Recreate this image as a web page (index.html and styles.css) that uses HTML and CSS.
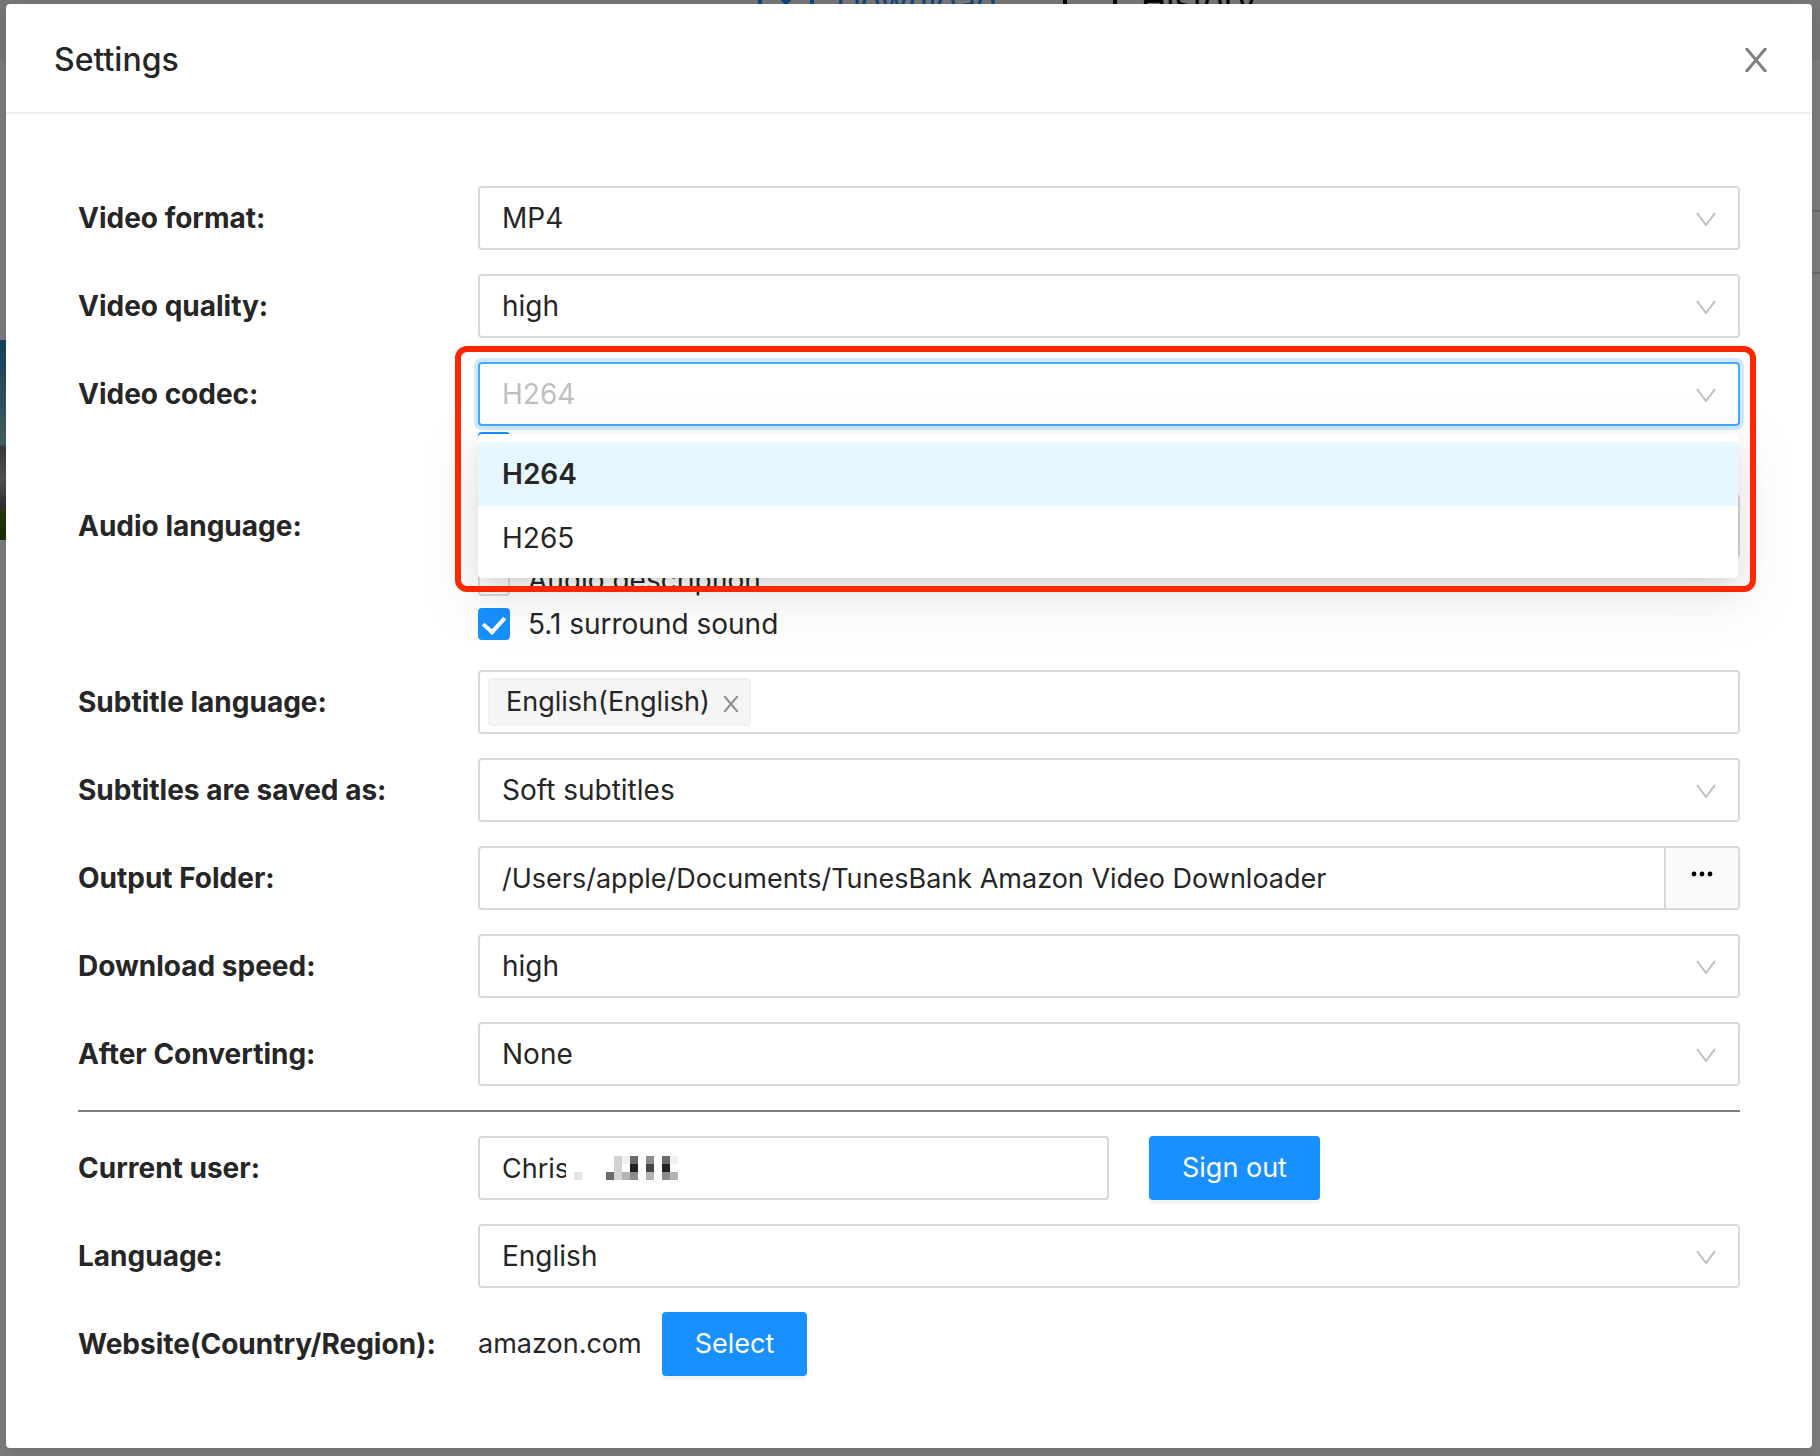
FILE: index.html
```html
<!DOCTYPE html>
<html lang="en">
<head>
    <meta charset="UTF-8">
    <meta name="viewport" content="width=device-width, initial-scale=1.0">
    <title>Settings</title>
    <link rel="stylesheet" href="styles.css">
</head>
<body>
    <!-- App window behind the dialog -->
    <div class="app" aria-hidden="true">
        <nav class="tabs">
            <a href="#" class="tab active" tabindex="-1">
                <svg viewBox="0 0 60 40" class="tab-icon"><path d="M4 36V6h14M56 36V6H42M30 2v14M22 14l8 9 8-9z" /></svg>
                Download
            </a>
            <a href="#" class="tab" tabindex="-1">
                <svg viewBox="0 0 60 40" class="tab-icon"><path d="M4 36V8M54 36V8" /></svg>
                History
            </a>
        </nav>
        <div class="app-button"></div>
        <div class="thumb"></div>
    </div>

    <!-- Settings dialog -->
    <div class="mask">
        <div class="modal" role="dialog" aria-labelledby="title">
            <header class="modal-header">
                <h1 id="title">Settings</h1>
                <button class="close-btn" aria-label="Close">
                    <svg viewBox="0 0 24 24"><path d="M2 0l20 24M22 0L2 24" /></svg>
                </button>
            </header>

            <form class="modal-body">
                <div class="row">
                    <label for="format">Video format:</label>
                    <div class="select">
                        <select id="format"><option>MP4</option></select>
                        <svg class="arrow" viewBox="0 0 20 14"><path d="M1 1l9 12 9-12" /></svg>
                    </div>
                </div>

                <div class="row">
                    <label for="quality">Video quality:</label>
                    <div class="select">
                        <select id="quality"><option>high</option></select>
                        <svg class="arrow" viewBox="0 0 20 14"><path d="M1 1l9 12 9-12" /></svg>
                    </div>
                </div>

                <div class="row">
                    <label for="codec">Video codec:</label>
                    <div class="field">
                        <div class="select open">
                            <select id="codec"><option>H264</option><option>H265</option></select>
                            <svg class="arrow" viewBox="0 0 20 14"><path d="M1 1l9 12 9-12" /></svg>
                            <ul class="dropdown" role="listbox" aria-label="Video codec">
                                <li role="option" aria-selected="true" class="selected">H264</li>
                                <li role="option" aria-selected="false">H265</li>
                            </ul>
                            <div class="highlight"></div>
                        </div>
                        <div class="check">
                            <input type="checkbox" aria-label="Video codec option" checked>
                        </div>
                    </div>
                </div>

                <div class="row">
                    <label for="audio">Audio language:</label>
                    <div class="field">
                        <input type="text" id="audio" class="box">
                        <div class="check">
                            <input type="checkbox" id="description">
                            <label for="description">Audio description</label>
                        </div>
                        <div class="check">
                            <input type="checkbox" id="surround" checked>
                            <label for="surround">5.1 surround sound</label>
                        </div>
                    </div>
                </div>

                <div class="row">
                    <label for="subtitle">Subtitle language:</label>
                    <div class="box tags">
                        <span class="tag">English(English)
                            <button type="button" aria-label="Remove English">
                                <svg viewBox="0 0 24 24"><path d="M2 0l20 24M22 0L2 24" /></svg>
                            </button>
                        </span>
                        <input type="text" id="subtitle">
                    </div>
                </div>

                <div class="row">
                    <label for="saved">Subtitles are saved as:</label>
                    <div class="select">
                        <select id="saved"><option>Soft subtitles</option></select>
                        <svg class="arrow" viewBox="0 0 20 14"><path d="M1 1l9 12 9-12" /></svg>
                    </div>
                </div>

                <div class="row">
                    <label for="folder">Output Folder:</label>
                    <div class="folder">
                        <input type="text" id="folder" class="box" value="/Users/apple/Documents/TunesBank Amazon Video Downloader">
                        <button type="button" aria-label="Browse">
                            <svg viewBox="0 0 22 6"><circle cx="3" cy="3" r="2.4" /><circle cx="11" cy="3" r="2.4" /><circle cx="19" cy="3" r="2.4" /></svg>
                        </button>
                    </div>
                </div>

                <div class="row">
                    <label for="speed">Download speed:</label>
                    <div class="select">
                        <select id="speed"><option>high</option></select>
                        <svg class="arrow" viewBox="0 0 20 14"><path d="M1 1l9 12 9-12" /></svg>
                    </div>
                </div>

                <div class="row">
                    <label for="after">After Converting:</label>
                    <div class="select">
                        <select id="after"><option>None</option></select>
                        <svg class="arrow" viewBox="0 0 20 14"><path d="M1 1l9 12 9-12" /></svg>
                    </div>
                </div>

                <hr>

                <div class="row">
                    <label for="user">Current user:</label>
                    <div class="user">
                        <div class="user-name">
                            <input type="text" id="user" class="box" value="Chris" readonly>
                            <!-- Pixelated part of the name -->
                            <svg class="mosaic" viewBox="0 0 112 24" shape-rendering="crispEdges">
                                <path fill="#fff" d="M0 0h112v24H0z" />
                                <path fill="#e4e4e4" d="M8 16h8v8H8z" />
                                <path fill="#d2d2d2" d="M48 0h8v24h-8z" />
                                <path fill="#f0f0f0" d="M56 0h8v8h-8zM104 0h8v8h-8z" />
                                <path fill="#6a6a6a" d="M40 16h8v8h-8zM64 0h8v8h-8zM96 0h8v8h-8z" />
                                <path fill="#8c8c8c" d="M80 0h8v8h-8zM64 16h8v8h-8zM96 16h8v8h-8z" />
                                <path fill="#222" d="M64 8h8v8h-8zM96 8h8v8h-8z" />
                                <path fill="#444" d="M80 8h8v8h-8z" />
                                <path fill="#b4b4b4" d="M56 16h8v8h-8zM80 16h8v8h-8zM104 16h8v8h-8z" />
                            </svg>
                        </div>
                        <button type="button" class="primary">Sign out</button>
                    </div>
                </div>

                <div class="row">
                    <label for="language">Language:</label>
                    <div class="select">
                        <select id="language"><option>English</option></select>
                        <svg class="arrow" viewBox="0 0 20 14"><path d="M1 1l9 12 9-12" /></svg>
                    </div>
                </div>

                <div class="row">
                    <label for="website">Website(Country/Region):</label>
                    <div class="website">
                        <span>amazon.com</span>
                        <button type="button" id="website" class="primary">Select</button>
                    </div>
                </div>
            </form>
        </div>
    </div>
</body>
</html>
```

FILE: styles.css
```css
* {
    box-sizing: border-box;
}

body {
    margin: 0;
    min-height: 100vh;
    background: #fff;
    font-family: Inter, 'Liberation Sans', sans-serif;
    font-size: 28px;
    line-height: 44px;
    color: #262626;
    overflow-x: hidden;
}

button,
input,
select {
    font: inherit;
    color: inherit;
}

svg {
    fill: none;
    stroke: currentColor;
    stroke-width: 2;
}

/* App behind the dialog */
.app {
    position: absolute;
    inset: 0;
    overflow: hidden;
}

.tabs {
    display: flex;
    justify-content: center;
    gap: 64px;
    height: 80px;
    margin-top: -20px;
    padding-left: 192px;
    background: #f0f0f0;
}

.tab {
    display: flex;
    gap: 20px;
    height: 44px;
    font-size: 34px;
    color: #000;
    text-decoration: none;
}

.tab.active {
    color: #1890ff;
}

.tab-icon {
    width: 60px;
    height: 40px;
    stroke-width: 4;
}

.app-button {
    position: absolute;
    top: 210px;
    right: -20px;
    width: 80px;
    height: 64px;
    border: 2px solid #d9d9d9;
}

.thumb {
    position: absolute;
    top: 340px;
    left: 0;
    width: 200px;
    height: 200px;
    background: linear-gradient(#2b86c0, #8fc3c8 52%, #777 54%, #aaa 70%, #666 82%, #4c6f0c 88%, #356008);
}

/* Dialog */
.mask {
    position: relative;
    min-height: 100vh;
    padding: 4px 8px 8px 6px;
    background: rgba(0, 0, 0, 0.5);
}

.modal {
    background: #fff;
    border-radius: 4px;
    box-shadow: 0 6px 24px rgba(0, 0, 0, 0.15);
}

.modal-header {
    display: flex;
    justify-content: space-between;
    align-items: center;
    height: 110px;
    padding: 4px 44px 0 48px;
    border-bottom: 2px solid #f0f0f0;
}

.modal-header h1 {
    margin: 0;
    font-size: 32px;
    font-weight: 500;
}

.close-btn {
    display: flex;
    padding: 0;
    border: none;
    background: none;
    color: #808080;
    cursor: pointer;
}

.close-btn svg {
    width: 24px;
    height: 24px;
    stroke-width: 3;
}

.modal-body {
    display: flex;
    flex-direction: column;
    gap: 24px;
    padding: 72px;
}

.row {
    display: grid;
    grid-template-columns: 400px 1fr;
}

.row > label {
    line-height: 64px;
    font-weight: 700;
}

.box,
.select select {
    display: block;
    width: 100%;
    height: 64px;
    padding: 0 22px;
    border: 2px solid #d9d9d9;
    border-radius: 4px;
    background: #fff;
    outline: none;
}

.box,
.website,
.primary {
    font-size: 27px;
}

.select {
    position: relative;
}

.select select {
    appearance: none;
}

.arrow {
    position: absolute;
    top: 26px;
    right: 24px;
    width: 20px;
    height: 14px;
    color: #bfbfbf;
    pointer-events: none;
}

/* Open codec list */
.select.open select {
    border-color: #40a9ff;
    box-shadow: 0 0 0 4px rgba(24, 144, 255, 0.2);
    color: #bfbfbf;
}

.dropdown {
    position: absolute;
    top: 72px;
    left: 0;
    right: 2px;
    z-index: 1;
    margin: 0;
    padding: 8px 0;
    list-style: none;
    background: #fff;
    border-radius: 4px;
    box-shadow: 0 6px 12px -8px rgba(0, 0, 0, 0.12), 0 12px 32px rgba(0, 0, 0, 0.08), 0 18px 56px 16px rgba(0, 0, 0, 0.05);
}

.dropdown li {
    padding: 0 24px;
    line-height: 64px;
}

.dropdown .selected {
    background: #e6f7ff;
    font-weight: 600;
}

.highlight {
    position: absolute;
    top: -16px;
    left: -23px;
    right: -16px;
    z-index: 2;
    height: 246px;
    border: 6px solid #ff2600;
    border-radius: 12px;
    pointer-events: none;
}

/* Checkboxes */
.check {
    display: flex;
    align-items: center;
    gap: 18px;
    height: 44px;
}

.check input {
    appearance: none;
    display: grid;
    place-items: center;
    width: 32px;
    height: 32px;
    margin: 0;
    border: 2px solid #d9d9d9;
    border-radius: 4px;
    background: #fff;
}

.check input:checked {
    border-color: #1890ff;
    background: #1890ff;
}

.check input:checked::after {
    content: '';
    width: 10px;
    height: 17px;
    margin-bottom: 3px;
    border: solid #fff;
    border-width: 0 4px 4px 0;
    transform: rotate(42deg);
}

/* Subtitle tags */
.tags {
    display: flex;
    align-items: center;
    gap: 8px;
    padding: 0 8px;
}

.tag {
    display: flex;
    align-items: center;
    gap: 13px;
    height: 48px;
    padding: 0 10px 0 16px;
    border: 2px solid #f0f0f0;
    border-radius: 4px;
    background: #f5f5f5;
}

.tag button {
    display: flex;
    padding: 3px 0 0;
    border: none;
    background: none;
    color: #8c8c8c;
}

.tag svg {
    width: 16px;
    height: 16px;
    stroke-width: 3;
}

.tags input {
    flex: 1;
    min-width: 0;
    border: none;
    outline: none;
}

/* Output folder */
.folder {
    display: grid;
    grid-template-columns: 1fr 76px;
}

.folder .box {
    border-right: none;
    border-radius: 4px 0 0 4px;
}

.folder button {
    display: flex;
    justify-content: center;
    padding: 23px 0;
    border: 2px solid #d9d9d9;
    border-radius: 0 4px 4px 0;
    background: #fafafa;
}

.folder svg {
    width: 22px;
    height: 6px;
    fill: #000;
    stroke: none;
}

hr {
    width: 100%;
    height: 2px;
    margin: 0;
    border: none;
    background: #808080;
}

/* Account */
.user {
    display: grid;
    grid-template-columns: 50% 1fr;
    gap: 40px;
    justify-items: start;
}

.user-name {
    position: relative;
    width: 100%;
}

.mosaic {
    position: absolute;
    top: 20px;
    left: 88px;
    width: 112px;
    height: 24px;
    stroke: none;
}

.primary {
    height: 64px;
    padding: 0 33px;
    border: none;
    border-radius: 4px;
    background: #1890ff;
    box-shadow: 0 4px 0 rgba(0, 0, 0, 0.04);
    color: #fff;
    cursor: pointer;
}

.website {
    display: flex;
    align-items: center;
    gap: 20px;
}
```
